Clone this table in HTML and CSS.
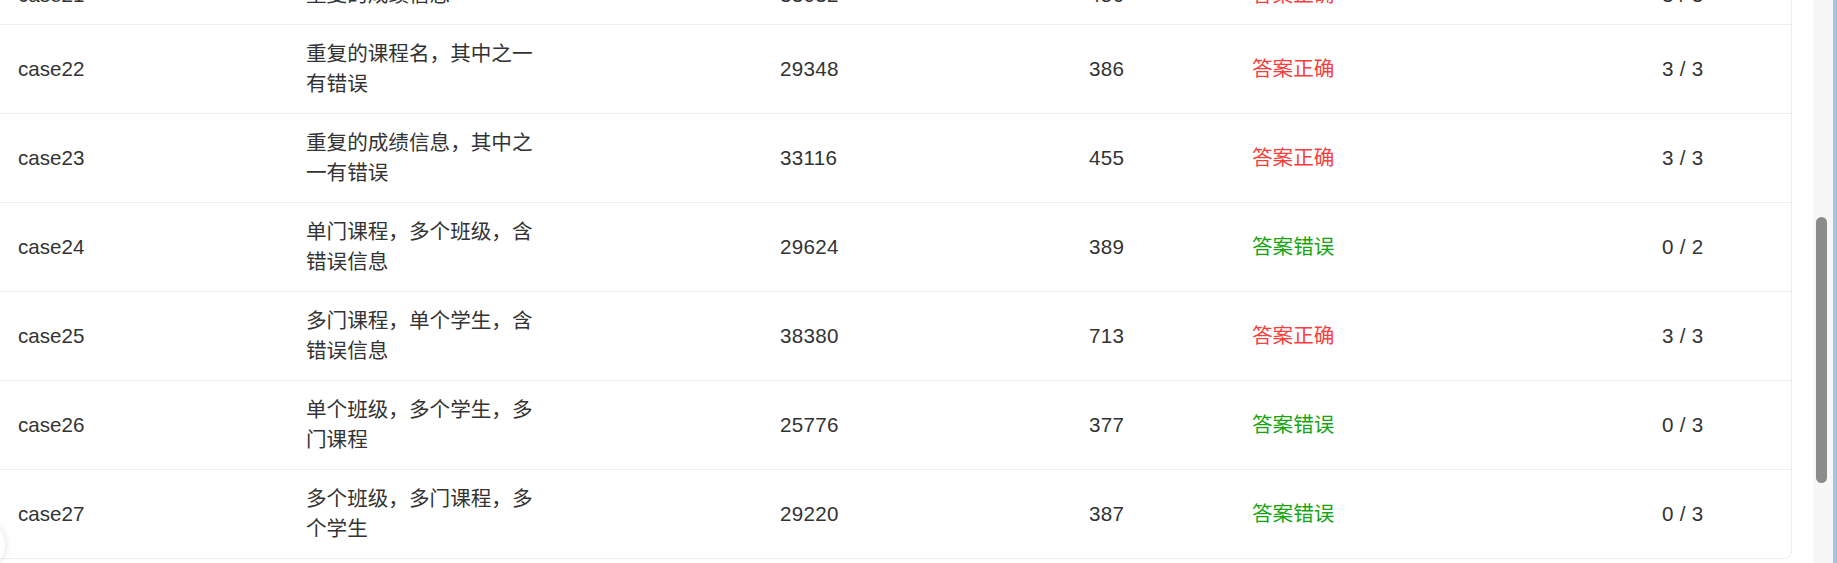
FILE: index.html
```html
<!DOCTYPE html>
<html lang="zh-CN">
<head>
<meta charset="utf-8">
<title>测试结果</title>
<link rel="stylesheet" href="styles.css">
</head>
<body>
<div class="page">
  <main class="main">
    <div class="card">
      <div class="table">
        <div class="row">
          <div class="cell c1">case21</div>
          <div class="cell c2"><div class="desc">重复的成绩信息</div></div>
          <div class="cell c3">33032</div>
          <div class="cell c4">456</div>
          <div class="cell c5 ok">答案正确</div>
          <div class="cell c6">3 / 3</div>
        </div>
        <div class="row">
          <div class="cell c1">case22</div>
          <div class="cell c2"><div class="desc">重复的课程名，其中之一有错误</div></div>
          <div class="cell c3">29348</div>
          <div class="cell c4">386</div>
          <div class="cell c5 ok">答案正确</div>
          <div class="cell c6">3 / 3</div>
        </div>
        <div class="row">
          <div class="cell c1">case23</div>
          <div class="cell c2"><div class="desc">重复的成绩信息，其中之一有错误</div></div>
          <div class="cell c3">33116</div>
          <div class="cell c4">455</div>
          <div class="cell c5 ok">答案正确</div>
          <div class="cell c6">3 / 3</div>
        </div>
        <div class="row">
          <div class="cell c1">case24</div>
          <div class="cell c2"><div class="desc">单门课程，多个班级，含错误信息</div></div>
          <div class="cell c3">29624</div>
          <div class="cell c4">389</div>
          <div class="cell c5 bad">答案错误</div>
          <div class="cell c6">0 / 2</div>
        </div>
        <div class="row">
          <div class="cell c1">case25</div>
          <div class="cell c2"><div class="desc">多门课程，单个学生，含错误信息</div></div>
          <div class="cell c3">38380</div>
          <div class="cell c4">713</div>
          <div class="cell c5 ok">答案正确</div>
          <div class="cell c6">3 / 3</div>
        </div>
        <div class="row">
          <div class="cell c1">case26</div>
          <div class="cell c2"><div class="desc">单个班级，多个学生，多门课程</div></div>
          <div class="cell c3">25776</div>
          <div class="cell c4">377</div>
          <div class="cell c5 bad">答案错误</div>
          <div class="cell c6">0 / 3</div>
        </div>
        <div class="row last">
          <div class="cell c1">case27</div>
          <div class="cell c2"><div class="desc">多个班级，多门课程，多个学生</div></div>
          <div class="cell c3">29220</div>
          <div class="cell c4">387</div>
          <div class="cell c5 bad">答案错误</div>
          <div class="cell c6">0 / 3</div>
        </div>
      </div>
    </div>
  </main>
  <div class="scrollbar"><div class="thumb"></div></div>
  <div class="edge"></div>
</div>
<div class="fab"></div>
</body>
</html>
```
FILE: styles.css
```css
html, body {
  margin: 0;
  padding: 0;
  height: 100%;
  overflow: hidden;
  background: #ffffff;
}
body {
  position: relative;
  font-family: "Liberation Sans", "Noto Sans CJK SC", sans-serif;
  font-size: 20.6px;
  color: #333333;
}
.page {
  display: flex;
  height: 563px;
}
.main {
  flex: 1;
  min-width: 0;
  padding-right: 21px;
}
.card {
  margin-top: -34px;
  border: 1px solid #ebeef5;
  border-left: none;
  border-top: none;
  border-radius: 0 0 8px 0;
  background: #ffffff;
  overflow: hidden;
}
.table {
  display: flex;
  flex-direction: column;
}
.row {
  display: grid;
  grid-template-columns: 289px 473px 309px 163px 410px 1fr;
  align-items: center;
  padding: 14px 0;
  border-bottom: 1px solid #ebeef5;
  line-height: 30px;
}
.row.last {
  border-bottom: none;
}
.cell {
  padding-left: 18px;
  white-space: nowrap;
}
.c3, .c4, .c6 {
  letter-spacing: 0.3px;
}
.c2 {
  padding-left: 17px;
  white-space: normal;
}
.desc {
  width: 232px;
  line-break: strict;
}
.ok {
  color: #fa3d3d;
}
.bad {
  color: #14a514;
}
.scrollbar {
  width: 20px;
  background: #f7f7f7;
  display: flex;
  flex-direction: column;
  align-items: center;
  padding-top: 217px;
}
.thumb {
  width: 11px;
  height: 266px;
  border-radius: 6px;
  background: #8b8b8b;
  margin-right: 3px;
}
.edge {
  width: 4px;
  background: #a2c6de;
}
.fab {
  position: absolute;
  left: -43px;
  top: 521px;
  width: 48px;
  height: 48px;
  border-radius: 50%;
  background: #ffffff;
  box-shadow: 0 0 8px rgba(0, 0, 0, 0.12);
}
```
